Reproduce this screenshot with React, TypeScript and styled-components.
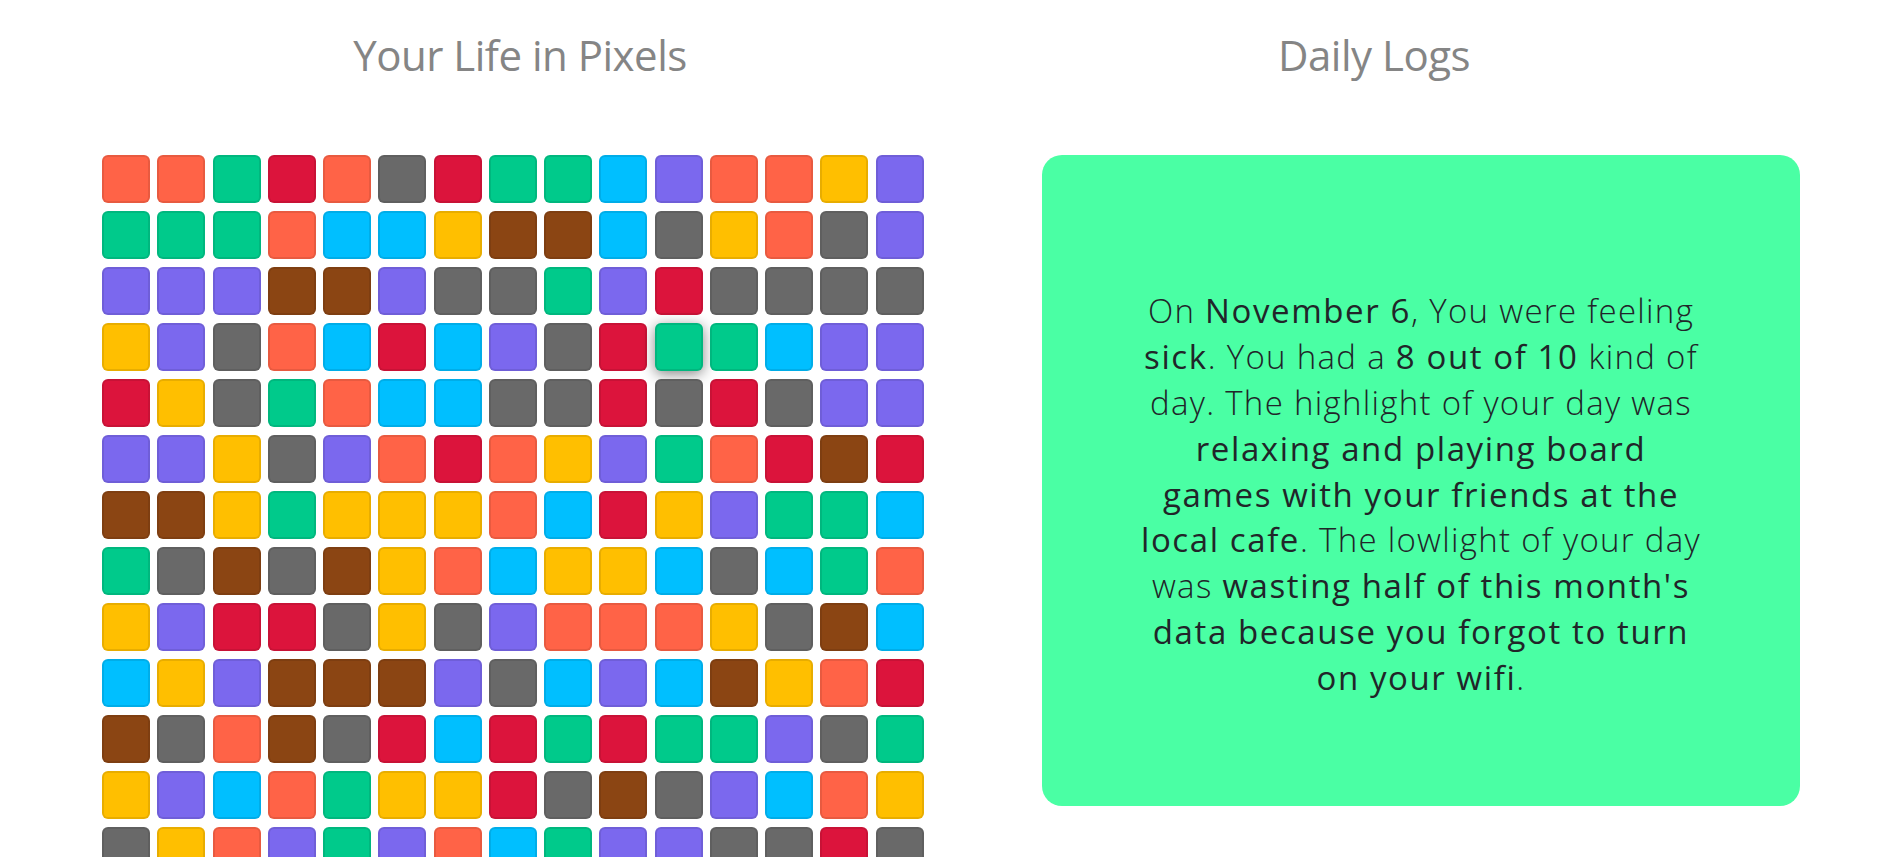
import React from "react";
import styled, { createGlobalStyle } from "styled-components";

const GlobalStyle = createGlobalStyle`
  html, body {
    margin: 0;
    padding: 0;
    background: #ffffff;
    overflow: hidden;
  }
  body {
    font-family: "Open Sans", "Noto Sans", sans-serif;
    color: #212529;
  }
  * { box-sizing: border-box; }
`;

const COLORS: Record<string, string> = {
  T: "#FF6347",
  G: "#00CA8B",
  C: "#DC143C",
  D: "#696969",
  B: "#00BFFF",
  P: "#7B68EE",
  Y: "#FFBF00",
  N: "#8B4513",
};

const ROWS = [
  "TTGCTDCGGBPTTYP",
  "GGGTBBYNNBDYTDP",
  "PPPNNPDDGPCDDDD",
  "YPDTBCBPDCGGBPP",
  "CYDGTBBDDCDCDPP",
  "PPYDPTCTYPGTCNC",
  "NNYGYYYTBCYPGGB",
  "GDNDNYTBYYBDBGT",
  "YPCCDYDPTTTYDNB",
  "BYPNNNPDBPBNYTC",
  "NDTNDCBCGCGGPDG",
  "YPBTGYYCDNDPBTY",
  "DYTPGPTBGPPDDCD",
];

const ACTIVE = { row: 3, col: 10 };

const Page = styled.main`
  display: grid;
  grid-template-columns: 1fr 1fr;
  padding: 0 85px 0 93px;
  min-height: 100vh;
`;

const Column = styled.section`
  display: flex;
  flex-direction: column;
  align-items: stretch;
`;

const Title = styled.h2`
  margin: 31px 0 76px;
  font-size: 42px;
  line-height: 48px;
  font-weight: 400;
  color: #858585;
  text-align: center;
  letter-spacing: -0.5px;
`;

const PixelGrid = styled.div`
  display: grid;
  grid-template-columns: repeat(15, 48px);
  column-gap: 7.25px;
  row-gap: 8px;
  margin-left: 9px;
`;

const Pixel = styled.div<{ $color: string; $active?: boolean }>`
  width: 48px;
  height: 48px;
  border-radius: 6px;
  background: ${(p) => p.$color};
  border: 2px solid rgba(0, 0, 0, 0.09);
  box-shadow: ${(p) =>
    p.$active ? "0 3px 14px rgba(0, 0, 0, 0.48)" : "none"};
  cursor: pointer;
`;

const LogCard = styled.article`
  margin-left: 95px;
  margin-right: 1px;
  height: 651px;
  border-radius: 20px;
  background: #4affa4;
  display: flex;
  align-items: center;
  justify-content: center;
  padding: 28px 60px 0;
`;

const LogText = styled.p`
  margin: 0;
  font-size: 33px;
  line-height: 45.8px;
  font-weight: 300;
  text-align: center;
  color: #212529;
  letter-spacing: 1.3px;
`;

const Em = styled.span`
  font-weight: 400;
  letter-spacing: 1.6px;
`;

export default function App() {
  return (
    <>
      <GlobalStyle />
      <Page>
        <Column>
          <Title>Your Life in Pixels</Title>
          <PixelGrid>
            {ROWS.map((row, r) =>
              row.split("").map((c, i) => (
                <Pixel
                  key={`${r}-${i}`}
                  $color={COLORS[c]}
                  $active={r === ACTIVE.row && i === ACTIVE.col}
                />
              ))
            )}
          </PixelGrid>
        </Column>
        <Column>
          <Title>Daily Logs</Title>
          <LogCard>
            <LogText>
              On <Em>November 6</Em>, You were feeling
              <br />
              <Em>sick</Em>. You had a <Em>8 out of 10</Em> kind of
              <br />
              day. The highlight of your day was
              <br />
              <Em>
                relaxing and playing board
                <br />
                games with your friends at the
                <br />
                local cafe
              </Em>
              . The lowlight of your day
              <br />
              was{" "}
              <Em>
                wasting half of this month's
                <br />
                data because you forgot to turn
                <br />
                on your wifi
              </Em>
              .
            </LogText>
          </LogCard>
        </Column>
      </Page>
    </>
  );
}
